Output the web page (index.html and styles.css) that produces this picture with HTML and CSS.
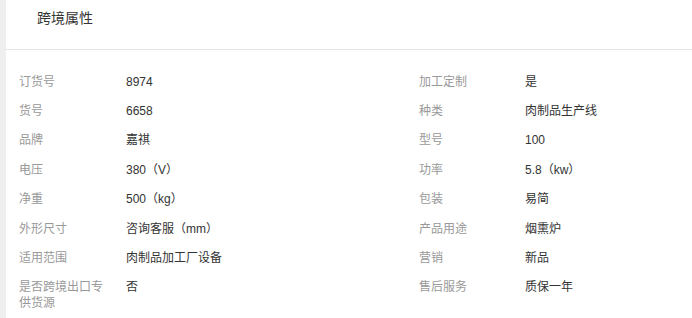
FILE: index.html
```html
<!DOCTYPE html>
<html lang="zh-CN">
<head>
<meta charset="utf-8">
<title>跨境属性</title>
<link rel="stylesheet" href="styles.css">
</head>
<body>
<div class="panel">
  <div class="header"><h2 class="title">跨境属性</h2></div>
  <div class="attrs">
    <div class="label">订货号</div><div class="value">8974</div>
    <div class="label">加工定制</div><div class="value">是</div>
    <div class="label">货号</div><div class="value">6658</div>
    <div class="label">种类</div><div class="value">肉制品生产线</div>
    <div class="label">品牌</div><div class="value">嘉祺</div>
    <div class="label">型号</div><div class="value">100</div>
    <div class="label">电压</div><div class="value">380（V）</div>
    <div class="label">功率</div><div class="value">5.8（kw）</div>
    <div class="label">净重</div><div class="value">500（kg）</div>
    <div class="label">包装</div><div class="value">易简</div>
    <div class="label">外形尺寸</div><div class="value">咨询客服（mm）</div>
    <div class="label">产品用途</div><div class="value">烟熏炉</div>
    <div class="label">适用范围</div><div class="value">肉制品加工厂设备</div>
    <div class="label">营销</div><div class="value">新品</div>
    <div class="label">是否跨境出口专供货源</div><div class="value">否</div>
    <div class="label">售后服务</div><div class="value">质保一年</div>
  </div>
</div>
</body>
</html>
```

FILE: styles.css
```css
html, body {
  margin: 0;
  padding: 0;
  background: #efefef;
  font-family: "Liberation Sans", "Noto Sans CJK SC", sans-serif;
}
.panel {
  margin-left: 6px;
  background: #fff;
  min-height: 318px;
}
.header {
  box-sizing: border-box;
  height: 50px;
  padding: 8px 0 0 31px;
  border-bottom: 1px solid #e5e5e5;
}
.title {
  margin: 0;
  font-size: 14px;
  font-weight: normal;
  line-height: 20px;
  color: #333;
}
.attrs {
  display: grid;
  grid-template-columns: 107px 293px 106px 1fr;
  padding: 17px 0 0 13px;
  font-size: 12px;
  line-height: 16px;
}
.label {
  color: #999;
  padding: 6.7px 15px 6.7px 0;
}
.value {
  color: #333;
  padding: 6.7px 0;
}
```
